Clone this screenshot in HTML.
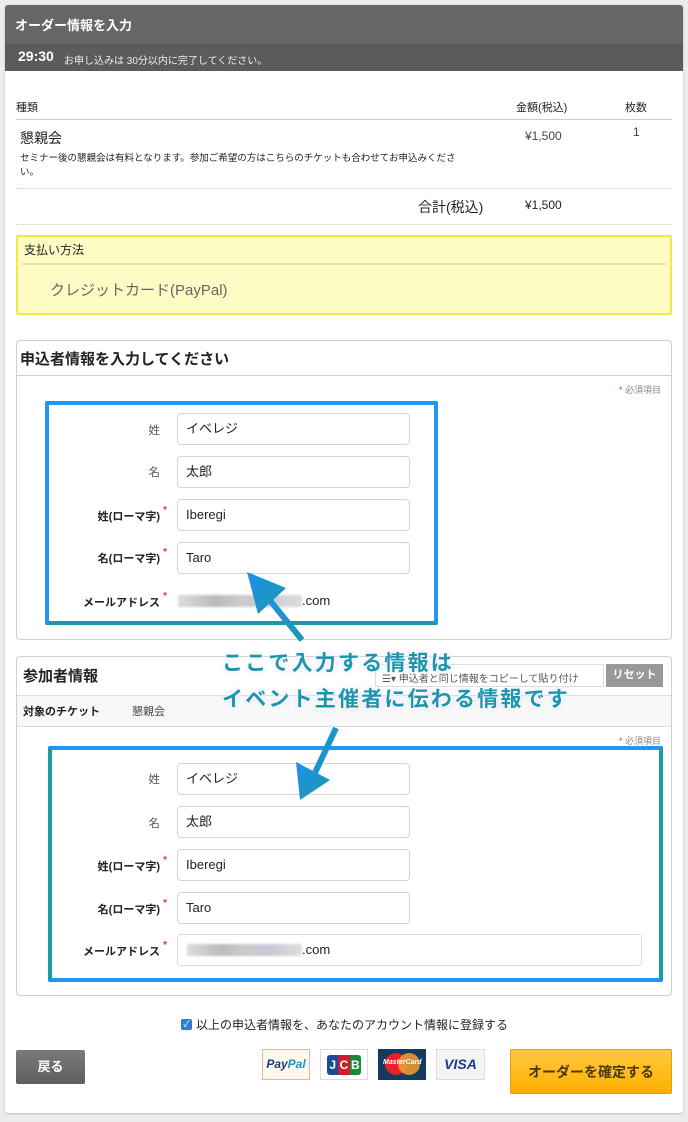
<!DOCTYPE html>
<html><head><meta charset="utf-8"><style>
*{margin:0;padding:0;box-sizing:border-box}
body{width:688px;height:1122px;background:#ececec;font-family:"Liberation Sans","Noto Sans CJK JP",sans-serif;position:relative;overflow:hidden;color:#222}
.a{position:absolute;white-space:nowrap}
.card{position:absolute;left:5px;top:5px;width:678px;height:1108px;background:#fff;border-radius:3px;box-shadow:0 1px 2px rgba(0,0,0,.2)}
.inp{position:absolute;height:32px;border:1px solid #d4d4d4;border-radius:4px;background:#fff;font-size:13px;padding-left:8px;line-height:30px}
.lb{position:absolute;width:120px;text-align:right;font-size:11.5px;color:#555}
.lb.b{font-weight:bold;color:#222;font-size:11px}
.st{color:#e33;font-size:10px;position:absolute;top:-6px;right:-7px}
.blur{position:absolute;height:12px;background:linear-gradient(90deg,#ddd,#bbb 30%,#ccc 50%,#c8c8d8 70%,#ddd);filter:blur(1px)}
.box{position:absolute;border:1px solid #d0d0d0;border-radius:4px;background:#fff}
.ov{position:absolute;font-size:21px;font-weight:bold;color:#1d96ad;text-shadow:0 0 3px #fff,0 0 4px #fff,0 0 6px #d8ccff;letter-spacing:2.2px}
</style></head><body>
<div class="card"></div>
<div class="a" style="left:5px;top:5px;width:678px;height:39px;background:#666;border-radius:3px 3px 0 0"></div>
<div class="a" style="left:5px;top:44px;width:678px;height:27px;background:#5b5b5b;border-top:1px solid #555"></div>
<div class="a" style="left:15px;top:15px;color:#fff;font-weight:bold;font-size:13px">オーダー情報を入力</div>
<div class="a" style="left:18px;top:48px;color:#fff;font-weight:bold;font-size:14px">29:30</div>
<div class="a" style="left:64px;top:52px;color:#eee;font-size:10px">お申し込みは 30分以内に完了してください。</div>

<div class="a" style="left:16px;top:99px;font-size:11px">種類</div>
<div class="a" style="left:516px;top:99px;font-size:11px">金額(税込)</div>
<div class="a" style="left:625px;top:99px;font-size:11px">枚数</div>
<div class="a" style="left:16px;top:119px;width:656px;border-top:1px solid #ccc"></div>
<div class="a" style="left:20px;top:128px;font-size:14px">懇親会</div>
<div class="a" style="left:525px;top:129px;font-size:12px;color:#444">¥1,500</div>
<div class="a" style="left:633px;top:125px;font-size:12px;color:#444">1</div>
<div class="a" style="left:20px;top:152px;font-size:9.5px;line-height:14px;white-space:normal;width:450px">セミナー後の懇親会は有料となります。参加ご希望の方はこちらのチケットも合わせてお申込みください。</div>
<div class="a" style="left:16px;top:188px;width:656px;border-top:1px dotted #ccc"></div>
<div class="a" style="left:418px;top:197px;font-size:14px">合計(税込)</div>
<div class="a" style="left:525px;top:198px;font-size:12px;color:#222">¥1,500</div>
<div class="a" style="left:16px;top:224px;width:656px;border-top:1px dotted #ccc"></div>

<div class="a" style="left:16px;top:235px;width:656px;height:80px;background:#fffbc4;border:2px solid #f2e84a;border-radius:2px"></div>
<div class="a" style="left:24px;top:241px;font-size:12px">支払い方法</div>
<div class="a" style="left:22px;top:263px;width:644px;border-top:2px solid #e8e0a0"></div>
<div class="a" style="left:50px;top:279px;font-size:15px;color:#666">クレジットカード(PayPal)</div>

<div class="box" style="left:16px;top:340px;width:656px;height:300px"></div>
<div class="a" style="left:20px;top:348px;font-size:15px;font-weight:bold">申込者情報を入力してください</div>
<div class="a" style="left:17px;top:375px;width:654px;border-top:1px solid #d0d0d0"></div>
<div class="a" style="left:619px;top:383px;font-size:9px;color:#888"><span style="color:#e33">*</span> 必須項目</div>
<div class="a" style="left:45px;top:401px;width:393px;height:224px;border:4px solid #2196f3;border-bottom-color:#1a9aa8;border-radius:2px"></div>
<div class="lb" style="left:40px;top:422px">姓</div>
<div class="inp" style="left:177px;top:413px;width:233px">イベレジ</div>
<div class="lb" style="left:40px;top:464px">名</div>
<div class="inp" style="left:177px;top:456px;width:233px">太郎</div>
<div class="lb b" style="left:40px;top:508px"><span style="position:relative">姓(ローマ字)<span class="st">*</span></span></div>
<div class="inp" style="left:177px;top:499px;width:233px">Iberegi</div>
<div class="lb b" style="left:40px;top:550px"><span style="position:relative">名(ローマ字)<span class="st">*</span></span></div>
<div class="inp" style="left:177px;top:542px;width:233px">Taro</div>
<div class="lb b" style="left:40px;top:594px"><span style="position:relative">メールアドレス<span class="st">*</span></span></div>
<div class="blur" style="left:178px;top:595px;width:124px"></div>
<div class="a" style="left:302px;top:593px;font-size:13px">.com</div>

<div class="box" style="left:16px;top:656px;width:656px;height:340px"></div>
<div class="a" style="left:17px;top:695px;width:654px;height:32px;background:#f8f8f8;border-top:1px solid #ddd;border-bottom:1px solid #ddd"></div>
<div class="a" style="left:23px;top:665px;font-size:15px;font-weight:bold">参加者情報</div>
<div class="a" style="left:375px;top:664px;width:229px;height:23px;border:1px solid #ddd;background:#fff;font-size:10px;color:#555;padding:5px 0 0 6px">☰▾ 申込者と同じ情報をコピーして貼り付け</div>
<div class="a" style="left:606px;top:664px;width:57px;height:23px;background:#999;color:#fff;font-size:11px;font-weight:bold;text-align:center;line-height:23px">リセット</div>
<div class="a" style="left:23px;top:703px;font-size:11px;font-weight:bold">対象のチケット</div>
<div class="a" style="left:132px;top:703px;font-size:11px;color:#444">懇親会</div>
<div class="a" style="left:619px;top:734px;font-size:9px;color:#888"><span style="color:#e33">*</span> 必須項目</div>
<div class="a" style="left:48px;top:746px;width:615px;height:236px;border:4px solid #2196f3;border-left-color:#1a9aa8;border-right-color:#1a9aa8;border-radius:2px"></div>
<div class="lb" style="left:40px;top:771px">姓</div>
<div class="inp" style="left:177px;top:763px;width:233px">イベレジ</div>
<div class="lb" style="left:40px;top:815px">名</div>
<div class="inp" style="left:177px;top:806px;width:233px">太郎</div>
<div class="lb b" style="left:40px;top:858px"><span style="position:relative">姓(ローマ字)<span class="st">*</span></span></div>
<div class="inp" style="left:177px;top:849px;width:233px">Iberegi</div>
<div class="lb b" style="left:40px;top:901px"><span style="position:relative">名(ローマ字)<span class="st">*</span></span></div>
<div class="inp" style="left:177px;top:892px;width:233px">Taro</div>
<div class="lb b" style="left:40px;top:943px"><span style="position:relative">メールアドレス<span class="st">*</span></span></div>
<div class="inp" style="left:177px;top:934px;width:465px;border-color:#dcd8ee"></div>
<div class="blur" style="left:187px;top:944px;width:115px"></div>
<div class="a" style="left:302px;top:942px;font-size:13px">.com</div>

<svg class="a" style="left:0;top:0" width="688" height="1122">
<defs><linearGradient id="g" x1="0" y1="0" x2="1" y2="1"><stop offset="0" stop-color="#1e8ff0"/><stop offset="1" stop-color="#1a9aa8"/></linearGradient></defs>
<line x1="302" y1="640" x2="268" y2="598" stroke="url(#g)" stroke-width="6"/>
<polygon points="247,572 286,588 258,614" fill="url(#g)"/>
<line x1="336" y1="728" x2="314" y2="775" stroke="url(#g)" stroke-width="6"/>
<polygon points="300,800 296,762 330,780" fill="url(#g)"/>
</svg>
<div class="ov" style="left:222px;top:647px">ここで入力する情報は</div>
<div class="ov" style="left:222px;top:683px">イベント主催者に伝わる情報です</div>

<div class="a" style="left:181px;top:1019px;width:11px;height:11px;background:#2a7fd0;border-radius:2px;color:#fff;font-size:9px;line-height:11px;text-align:center">✓</div>
<div class="a" style="left:196px;top:1016px;font-size:12px">以上の申込者情報を、あなたのアカウント情報に登録する</div>
<div class="a" style="left:16px;top:1050px;width:69px;height:34px;background:linear-gradient(#7a7a7a,#5e5e5e);border-radius:2px;color:#fff;font-weight:bold;font-size:13px;text-align:center;line-height:34px">戻る</div>
<div class="a" style="left:262px;top:1049px;width:48px;height:31px;border:1px solid #f0b0a0;background:#fff8ec;font-size:12px;font-weight:bold;font-style:italic;text-align:center;line-height:29px"><span style="color:#1a3a80">Pay</span><span style="color:#1e8fd0">Pal</span></div>
<div class="a" style="left:320px;top:1049px;width:48px;height:31px;border:1px solid #ddd;background:#fff;padding:5px 6px"><div style="display:flex;height:20px;font-size:12px;font-weight:bold;color:#fff;text-align:center;line-height:20px"><div style="flex:1;background:#1a4a9a;border-radius:3px 0 0 3px">J</div><div style="flex:1;background:#c8202a">C</div><div style="flex:1;background:#1a8a3a;border-radius:0 3px 3px 0">B</div></div></div>
<div class="a" style="left:378px;top:1049px;width:48px;height:31px;background:#153a60;overflow:hidden"><div style="position:absolute;left:7px;top:4px;width:22px;height:22px;border-radius:50%;background:#e8202a"></div><div style="position:absolute;left:20px;top:4px;width:22px;height:22px;border-radius:50%;background:#f5a030;opacity:.85"></div><div style="position:absolute;left:5px;top:10px;font-size:7px;color:#fff;font-style:italic;font-weight:bold">MasterCard</div></div>
<div class="a" style="left:436px;top:1049px;width:49px;height:31px;border:1px solid #ddd;background:#f4f4f4;color:#1a3a90;font-weight:bold;font-style:italic;font-size:14px;text-align:center;line-height:29px">VISA</div>
<div class="a" style="left:510px;top:1049px;width:162px;height:45px;background:linear-gradient(#ffc940,#ffb000);border:1px solid #e0a000;border-radius:2px;color:#4a3a00;font-weight:bold;font-size:14px;text-align:center;line-height:44px">オーダーを確定する</div>
</body></html>
